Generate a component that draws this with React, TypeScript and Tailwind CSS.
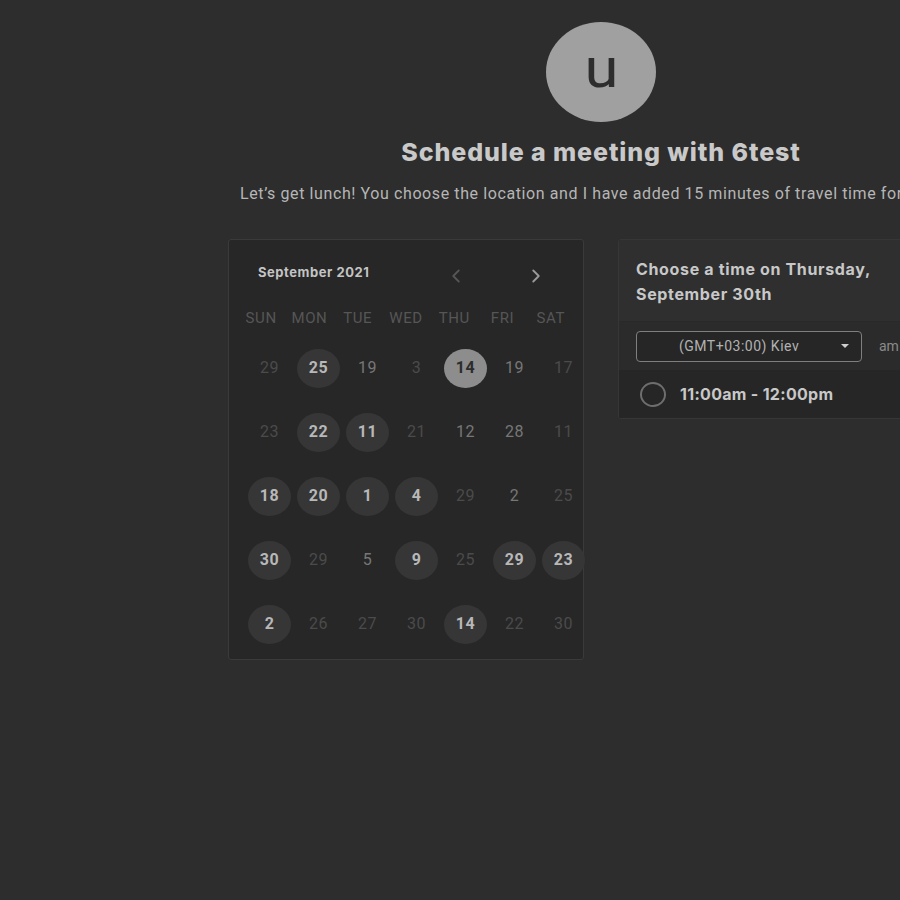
import React from "react";
import { ChevronLeft, ChevronRight } from "lucide-react";

type Kind = "dim" | "mid" | "avail" | "sel";
type Cell = { n: number; k: Kind };

const rows: Cell[][] = [
  [
    { n: 29, k: "dim" },
    { n: 25, k: "avail" },
    { n: 19, k: "mid" },
    { n: 3, k: "dim" },
    { n: 14, k: "sel" },
    { n: 19, k: "mid" },
    { n: 17, k: "dim" },
  ],
  [
    { n: 23, k: "dim" },
    { n: 22, k: "avail" },
    { n: 11, k: "avail" },
    { n: 21, k: "dim" },
    { n: 12, k: "mid" },
    { n: 28, k: "mid" },
    { n: 11, k: "dim" },
  ],
  [
    { n: 18, k: "avail" },
    { n: 20, k: "avail" },
    { n: 1, k: "avail" },
    { n: 4, k: "avail" },
    { n: 29, k: "dim" },
    { n: 2, k: "mid" },
    { n: 25, k: "dim" },
  ],
  [
    { n: 30, k: "avail" },
    { n: 29, k: "dim" },
    { n: 5, k: "mid" },
    { n: 9, k: "avail" },
    { n: 25, k: "dim" },
    { n: 29, k: "avail" },
    { n: 23, k: "avail" },
  ],
  [
    { n: 2, k: "avail" },
    { n: 26, k: "dim" },
    { n: 27, k: "dim" },
    { n: 30, k: "dim" },
    { n: 14, k: "avail" },
    { n: 22, k: "dim" },
    { n: 30, k: "dim" },
  ],
];

const days = ["SUN", "MON", "TUE", "WED", "THU", "FRI", "SAT"];

function DayCell({ c }: { c: Cell }) {
  if (c.k === "sel") {
    return (
      <div className="flex items-center justify-center h-[64px]">
        <div className="w-[43px] h-[39px] rounded-[50%] bg-[#8d8d8d] flex items-center justify-center text-[16px] font-bold tracking-[0.5px] text-[#2c2c2c]">
          {c.n}
        </div>
      </div>
    );
  }
  if (c.k === "avail") {
    return (
      <div className="flex items-center justify-center h-[64px]">
        <div className="w-[43px] h-[39px] rounded-[50%] bg-[#363636] flex items-center justify-center text-[16px] font-bold tracking-[0.5px] text-[#b8b8b8]">
          {c.n}
        </div>
      </div>
    );
  }
  return (
    <div
      className={
        "flex items-center justify-center h-[64px] text-[16px] tracking-[0.5px] " +
        (c.k === "mid" ? "text-[#777777]" : "text-[#4b4b4b]")
      }
    >
      {c.n}
    </div>
  );
}

export default function App() {
  return (
    <div
      className="w-[900px] h-[900px] overflow-hidden bg-[#2d2d2d]"
      style={{ fontFamily: "Roboto, 'Noto Sans', sans-serif" }}
    >
      <div className="w-[1202px] flex flex-col items-center pt-[22px]">
        <div className="w-[110px] h-[100px] rounded-[50%] bg-[#a0a0a0] flex items-center justify-center">
          <span className="text-[56px] leading-none text-[#2d2d2d] -mt-[8px] scale-x-110">u</span>
        </div>
        <h1
          className="mt-[14px] h-[32px] leading-[32px] text-[25px] font-extrabold tracking-[0.9px] text-[#c9c9c9]"
          style={{ fontFamily: "Inter, sans-serif" }}
        >
          Schedule a meeting with 6test
        </h1>
        <div className="mt-[15px] w-[722px] h-[22px] leading-[22px] text-[16px] tracking-[0.6px] text-[#b6b6b6] whitespace-nowrap">
          Let’s get lunch! You choose the location and I have added 15 minutes of travel time for me.
        </div>

        <div className="mt-[34px] flex gap-[34px] items-start">
          {/* Calendar */}
          <div className="w-[356px] h-[421px] rounded-[3px] border border-[#3a3a3a] bg-[#272727] pt-[17px]">
            <div className="flex items-center h-[32px] pl-[29px] pr-[36px]">
              <span
                className="text-[13px] font-bold tracking-[0.55px] text-[#c4c4c4]"
                style={{ fontFamily: "Inter, sans-serif" }}
              >
                September 2021
              </span>
              <div className="ml-auto flex items-center gap-[58px] mt-[6px]">
                <ChevronLeft size={22} strokeWidth={2} className="text-[#565656]" />
                <ChevronRight size={22} strokeWidth={2} className="text-[#9a9a9a]" />
              </div>
            </div>
            <div className="mt-[19px] ml-[8px] w-[338px] grid grid-cols-7 h-[20px]">
              {days.map((d) => (
                <div key={d} className="text-center text-[15px] leading-[20px] tracking-[0.6px] text-[#565656]">
                  {d}
                </div>
              ))}
            </div>
            <div className="mt-[8px] ml-[16px] w-[343px] grid grid-cols-7">
              {rows.flat().map((c, i) => (
                <DayCell key={i} c={c} />
              ))}
            </div>
          </div>

          {/* Time picker */}
          <div className="w-[356px] rounded-[3px] border border-[#363636] bg-[#2a2a2a] overflow-hidden">
            <div
              className="bg-[#2f2f2f] h-[82px] pt-[17px] pl-[17px] text-[16px] leading-[25px] font-bold tracking-[0.65px] text-[#c8c8c8] border-b border-[#292929]"
              style={{ fontFamily: "Inter, sans-serif" }}
            >
              Choose a time on Thursday,
              <br />
              September 30th
            </div>
            <div className="h-[48px] bg-[#2b2b2b] flex items-center pl-[17px]">
              <div className="w-[226px] h-[31px] rounded-[4px] border-[1.5px] border-[#7f7f7f] bg-[#262626] flex items-center pl-[42px] pr-[12px]">
                <span className="text-[14px] tracking-[0.5px] text-[#b2b2b2]">(GMT+03:00) Kiev</span>
                <span className="ml-auto w-0 h-0 border-l-[4px] border-r-[4px] border-t-[4px] border-l-transparent border-r-transparent border-t-[#cfcfcf]" />
              </div>
              <span className="ml-[17px] text-[14px] text-[#8a8a8a]">am</span>
            </div>
            <div className="h-[48px] bg-[#262626] flex items-center pl-[21px]">
              <div className="w-[26px] h-[25px] rounded-[50%] border-2 border-[#6e6e6e]" />
              <span
                className="ml-[14px] text-[16px] font-bold tracking-[0.3px] text-[#c8c8c8]"
                style={{ fontFamily: "Inter, sans-serif" }}
              >
                11:00am - 12:00pm
              </span>
            </div>
          </div>
        </div>
      </div>
    </div>
  );
}
